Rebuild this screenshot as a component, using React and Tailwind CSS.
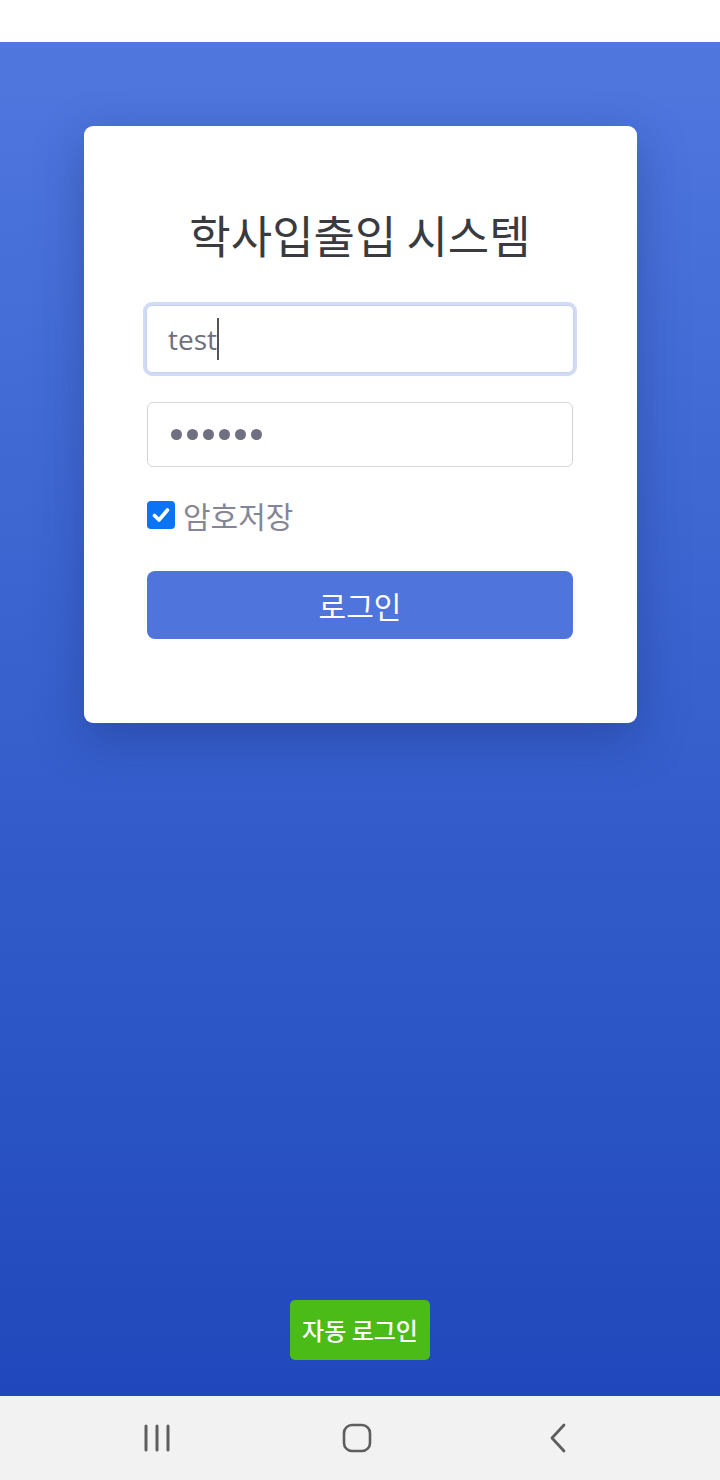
export default function App() {
  const kr = { fontFamily: '"Noto Sans CJK KR", "Noto Sans", sans-serif' };
  return (
    <div className="w-[720px] h-[1480px] flex flex-col bg-white" style={kr}>
      <div className="h-[42px] bg-white shrink-0" />
      <div className="flex-1 flex flex-col items-center bg-gradient-to-b from-[#4f77de] to-[#2048bc]">
        <div className="mt-[84px] w-[553px] h-[597px] bg-white rounded-[9px] shadow-[0_16px_48px_rgba(20,40,110,0.35)] flex flex-col items-center pt-[76px]">
          <h1 className="text-[45px] leading-[66px] text-[#3a3b40] font-normal">학사입출입 시스템</h1>
          <div className="mt-[34px] w-[434px] flex flex-col">
            <div className="rounded-[9px] border-[4px] border-[#d0dbf5] p-0">
              <div className="h-[68px] -m-px rounded-[6px] border border-[#c9d2ea] bg-white flex items-center pl-[21px]">
                <span className="text-[28px] text-[#6e6f80]" style={{ fontFamily: '"Open Sans", sans-serif' }}>test</span>
                <span className="w-[1.5px] h-[42px] bg-[#555]" />
              </div>
            </div>
            <div className="mt-[26px] mx-[4px] h-[65px] rounded-[6px] border border-[#d5d5dc] bg-white flex items-center pl-[23px] gap-[5px]">
              {[0,1,2,3,4,5].map(i => (
                <span key={i} className="w-[11px] h-[11px] rounded-full bg-[#6e6f80]" />
              ))}
            </div>
            <div className="mt-[31px] mx-[4px] flex items-center gap-[8px]">
              <span className="w-[28px] h-[28px] rounded-[4px] bg-[#0a74f5] flex items-center justify-center">
                <svg width="20" height="20" viewBox="0 0 20 20"><path d="M3.5 10.5 L8 15 L16.5 5" fill="none" stroke="white" strokeWidth="3.6" strokeLinecap="round" strokeLinejoin="round"/></svg>
              </span>
              <span className="text-[30px] leading-[34px] text-[#858695]">암호저장</span>
            </div>
            <button className="mt-[39px] mx-[4px] h-[68px] rounded-[8px] bg-[#4f74dc] text-white text-[30px] flex items-center justify-center">로그인</button>
          </div>
        </div>
        <div className="flex-1" />
        <button className="mb-[36px] w-[140px] h-[60px] rounded-[5px] bg-[#4bbb17] text-white text-[24px] font-medium flex items-center justify-center">자동 로그인</button>
      </div>
      <div className="h-[84px] shrink-0 bg-[#f2f2f2] flex items-center pl-[143px]">
        <svg width="28" height="28" viewBox="0 0 28 28">
          <path d="M3 2v24M14 2v24M25 2v24" stroke="#5e5e5e" strokeWidth="3" strokeLinecap="round" />
        </svg>
        <svg width="30" height="30" viewBox="0 0 30 30" className="ml-[171px]">
          <rect x="2" y="2" width="26" height="26" rx="8" fill="none" stroke="#5e5e5e" strokeWidth="2.6" />
        </svg>
        <svg width="22" height="30" viewBox="0 0 22 30" className="ml-[176px]">
          <path d="M16 2 L4 15 L16 28" fill="none" stroke="#5e5e5e" strokeWidth="2.8" strokeLinecap="round" strokeLinejoin="round" />
        </svg>
      </div>
    </div>
  );
}
